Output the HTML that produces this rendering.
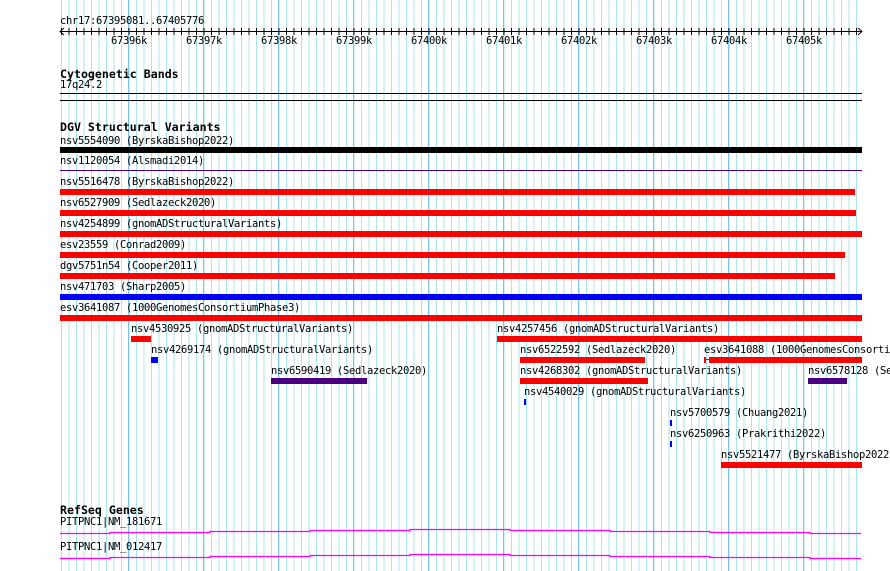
<!DOCTYPE html>
<html><head><meta charset="utf-8"><style>
html,body{margin:0;padding:0;background:#fff;}
svg{display:block}
text{font-family:"DejaVu Sans Mono","Liberation Mono",monospace;font-size:10.5px;letter-spacing:-0.32px;fill:#000}
.b{font-weight:bold;font-size:11.6px;letter-spacing:0px}
</style></head><body>
<svg width="890" height="571" xmlns="http://www.w3.org/2000/svg">
<defs>
<pattern id="mn" x="61" y="0" width="7.5" height="571" patternUnits="userSpaceOnUse"><rect x="0" y="0" width="1" height="571" fill="#a8e6ee"/></pattern>
<pattern id="mj" x="128" y="0" width="75" height="571" patternUnits="userSpaceOnUse"><rect x="0" y="0" width="1" height="571" fill="#7cc4e6"/></pattern>
<pattern id="tk" x="61" y="0" width="7.5" height="571" patternUnits="userSpaceOnUse"><rect x="0" y="28" width="1" height="7" fill="#000"/></pattern>
</defs>
<rect x="60" y="0" width="802" height="571" fill="url(#mn)"/>
<rect x="60" y="0" width="802" height="571" fill="url(#mj)"/>

<text x="60" y="24">chr17:67395081..67405776</text>
<rect x="60" y="28" width="802" height="7" fill="url(#tk)"/>
<rect x="60" y="31" width="802" height="1" fill="#000"/>
<path d="M64 28 L60 31.5 L64 35 M858 28 L862 31.5 L858 35" stroke="#000" fill="none"/>
<g text-anchor="middle">
<text x="129" y="44">67396k</text><text x="204" y="44">67397k</text><text x="279" y="44">67398k</text><text x="354" y="44">67399k</text><text x="429" y="44">67400k</text><text x="504" y="44">67401k</text><text x="579" y="44">67402k</text><text x="654" y="44">67403k</text><text x="729" y="44">67404k</text><text x="804" y="44">67405k</text>
</g>

<text class="b" x="60" y="78">Cytogenetic Bands</text>
<text x="60" y="88">17q24.2</text>
<rect x="60" y="93" width="802" height="1" fill="#000"/>
<rect x="60" y="100" width="802" height="1" fill="#000"/>

<text class="b" x="60" y="131">DGV Structural Variants</text>
<text x="60" y="144">nsv5554090 (ByrskaBishop2022)</text>
<rect x="60" y="147" width="802" height="6" fill="#000"/>
<text x="60" y="164">nsv1120054 (Alsmadi2014)</text>
<rect x="60" y="170" width="802" height="1" fill="#4b0082"/>
<text x="60" y="185">nsv5516478 (ByrskaBishop2022)</text>
<rect x="60" y="189" width="795" height="6" fill="#f00"/>
<text x="60" y="206">nsv6527909 (Sedlazeck2020)</text>
<rect x="60" y="210" width="796" height="6" fill="#f00"/>
<text x="60" y="227">nsv4254899 (gnomADStructuralVariants)</text>
<rect x="60" y="231" width="802" height="6" fill="#f00"/>
<text x="60" y="248">esv23559 (Conrad2009)</text>
<rect x="60" y="252" width="785" height="6" fill="#f00"/>
<text x="60" y="269">dgv5751n54 (Cooper2011)</text>
<rect x="60" y="273" width="775" height="6" fill="#f00"/>
<text x="60" y="290">nsv471703 (Sharp2005)</text>
<rect x="60" y="294" width="802" height="6" fill="#00f"/>
<text x="60" y="311">esv3641087 (1000GenomesConsortiumPhase3)</text>
<rect x="60" y="315" width="802" height="6" fill="#f00"/>

<text x="131" y="332">nsv4530925 (gnomADStructuralVariants)</text>
<rect x="131" y="336" width="20" height="6" fill="#f00"/>
<text x="497" y="332">nsv4257456 (gnomADStructuralVariants)</text>
<rect x="497" y="336" width="365" height="6" fill="#f00"/>
<text x="151" y="353">nsv4269174 (gnomADStructuralVariants)</text>
<rect x="151" y="357" width="7" height="6" fill="#00f"/>
<text x="520" y="353">nsv6522592 (Sedlazeck2020)</text>
<rect x="520" y="357" width="125" height="6" fill="#f00"/>
<text x="704" y="353">esv3641088 (1000GenomesConsortiumPhase3)</text>
<rect x="704" y="357" width="2" height="6" fill="#f00"/>
<rect x="704" y="359" width="6" height="1" fill="#f00"/>
<rect x="709" y="357" width="153" height="6" fill="#f00"/>
<text x="271" y="374">nsv6590419 (Sedlazeck2020)</text>
<rect x="271" y="378" width="96" height="6" fill="#4b0082"/>
<text x="520" y="374">nsv4268302 (gnomADStructuralVariants)</text>
<rect x="520" y="378" width="128" height="6" fill="#f00"/>
<text x="808" y="374">nsv6578128 (Sedlazeck2020)</text>
<rect x="808" y="378" width="39" height="6" fill="#4b0082"/>
<text x="524" y="395">nsv4540029 (gnomADStructuralVariants)</text>
<rect x="524" y="399" width="2" height="6" fill="#00f"/>
<text x="670" y="416">nsv5700579 (Chuang2021)</text>
<rect x="670" y="420" width="2" height="6" fill="#00f"/>
<text x="670" y="437">nsv6250963 (Prakrithi2022)</text>
<rect x="670" y="441" width="2" height="6" fill="#00f"/>
<text x="721" y="458">nsv5521477 (ByrskaBishop2022)</text>
<rect x="721" y="462" width="141" height="6" fill="#f00"/>

<text class="b" x="60" y="514">RefSeq Genes</text>
<text x="60" y="525">PITPNC1|NM_181671</text>
<path d="M60 533.5H110V532.5H210V531.5H310V530.5H410V529.5H510V530.5H610V531.5H710V532.5H810V533.5H861" stroke="#f0f" stroke-width="1.3" fill="none"/>
<text x="60" y="550">PITPNC1|NM_012417</text>
<path d="M60 558.5H110V557.5H210V556.5H310V555.5H410V554.5H510V555.5H610V556.5H710V557.5H810V558.5H861" stroke="#f0f" stroke-width="1.3" fill="none"/>
</svg>
</body></html>
